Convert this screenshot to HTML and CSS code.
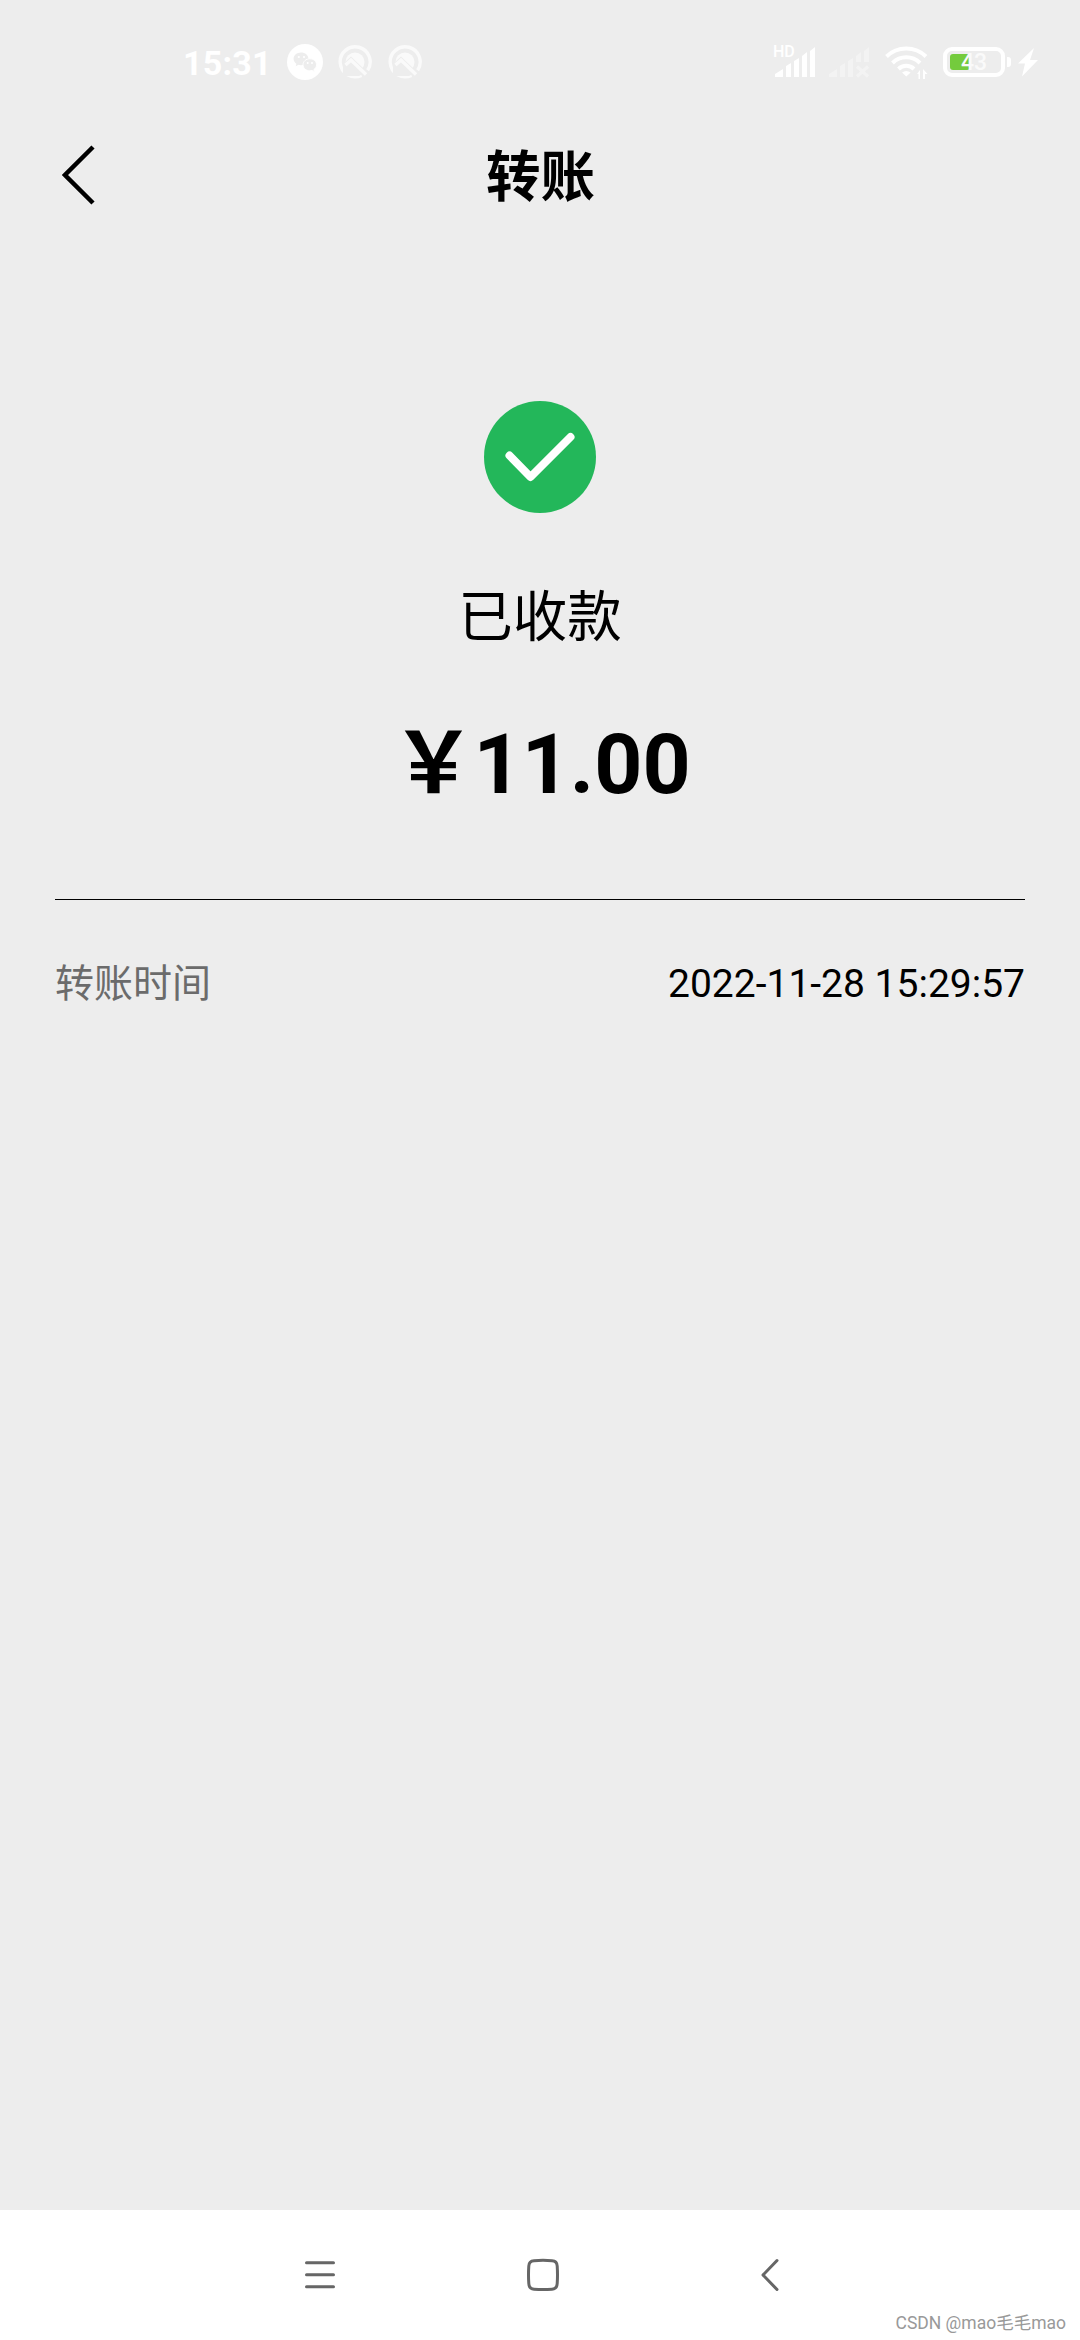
FILE: index.html
```html
<!DOCTYPE html>
<html lang="zh-CN">
<head>
    <meta charset="UTF-8">
    <meta name="viewport" content="width=device-width, initial-scale=1.0">
    <title>转账</title>
    <link rel="stylesheet" href="styles.css">
</head>
<body>
    <div class="phone">
        <div class="status-bar">
            <div class="status-left">
                <span class="clock">15:31</span>
                <svg class="icon-wechat" viewBox="0 0 36 36" width="36" height="36">
                    <circle cx="18" cy="18" r="18" fill="#fff"/>
                    <path d="M14 8.500c-4.200 0-7.400 2.800-7.400 6.300 0 2 1 3.700 2.800 4.900l-.7 2.500 2.800-1.400c.9.200 1.600.4 2.500.4 4.200 0 7.400-2.800 7.400-6.400S18.200 8.500 14 8.500z" fill="#ededed"/>
                    <path d="M22.800 14.800c-3.800 0-6.800 2.600-6.800 6s3 6 6.800 6c.8 0 1.500-.1 2.200-.3l2.400 1.200-.6-2.100c1.700-1.100 2.700-2.800 2.700-4.800 0-3.400-2.900-6-6.700-6z" fill="#ededed" stroke="#fff" stroke-width="1"/>
                    <g fill="#fff"><circle cx="11.800" cy="13" r="1.100"/><circle cx="17" cy="13" r="1.100"/><circle cx="20.700" cy="19" r="1"/><circle cx="25" cy="19" r="1"/></g>
                </svg>
                <svg class="icon-q" viewBox="0 0 34 34" width="34" height="34">
                    <path d="M23.500 30.400A15 15 0 1 1 29.600 25.200" fill="none" stroke="#fafafa" stroke-width="3.400"/>
                    <circle cx="17" cy="17" r="9.500" fill="#fafafa"/>
                    <path d="M5 19l8-7.500L29 27l-8 4H5z" fill="#ededed"/>
                    <path d="M7.500 20l5.500-5 15 14.500" fill="none" stroke="#fafafa" stroke-width="3.400"/>
                </svg>
                <svg class="icon-q" viewBox="0 0 34 34" width="34" height="34">
                    <path d="M23.500 30.400A15 15 0 1 1 29.600 25.200" fill="none" stroke="#fafafa" stroke-width="3.400"/>
                    <circle cx="17" cy="17" r="9.500" fill="#fafafa"/>
                    <path d="M5 19l8-7.500L29 27l-8 4H5z" fill="#ededed"/>
                    <path d="M7.500 20l5.500-5 15 14.500" fill="none" stroke="#fafafa" stroke-width="3.400"/>
                </svg>
            </div>
            <div class="status-right">
                <div class="signal">
                    <svg viewBox="0 0 42 32" width="42" height="32">
                        <path d="M1 31v-3l8-5v8zM12 31V20l5-3v14zM20 31V15l5-3v19zM28 31V10l5-4v25zM36 31V5l5-4v30z" fill="#fff"/>
                    </svg>
                    <span class="hd">HD</span>
                </div>
                <svg class="signal-off" viewBox="0 0 42 32" width="42" height="32">
                    <path d="M1 31v-3l8-5v8zM12 31V20l5-3v14zM20 31V15l5-3v19zM28 16V10l5-4v10zM36 16V5l5-4v15z" fill="#f3f3f3"/>
                    <path d="M29 20.500l11 10M40 20.500l-11 10" stroke="#f3f3f3" stroke-width="3.200"/>
                </svg>
                <svg class="wifi" viewBox="0 0 44 34" width="44" height="34">
                    <g fill="none" stroke="#fff" stroke-width="4">
                        <path d="M1.500 11.500a28.500 28.500 0 0 1 39.500 0"/>
                        <path d="M7.500 18a19.500 19.500 0 0 1 27.500 0"/>
                        <path d="M13.500 24a11 11 0 0 1 15.500 0"/>
                    </g>
                    <path d="M17 27.500q4.300-3 8.600 0L21.300 31.500z" fill="#fff"/>
                    <path d="M32 29l3-4v9h-1.500v-5zM38 34V24l4.500 5H40v5z" fill="#fff"/>
                </svg>
                <div class="battery">
                    <div class="battery-level"></div>
                    <span class="battery-text">43</span>
                </div>
                <div class="battery-cap"></div>
                <svg class="bolt" viewBox="0 0 20 30" width="20" height="30">
                    <path d="M16 1L0 16.500h7L4 29.500 20 13h-8z" fill="#fff"/>
                </svg>
            </div>
        </div>

        <div class="header">
            <svg class="back" viewBox="0 0 34 60" width="34" height="60">
                <path d="M31 2L3 30l28 28" fill="none" stroke="#000" stroke-width="4.500"/>
            </svg>
            <h1>转账</h1>
        </div>

        <div class="result">
            <svg class="check" viewBox="0 0 112 112" width="112" height="112">
                <circle cx="56" cy="56" r="56" fill="#23b75a"/>
                <path d="M25.500 54.500L46.500 76 86.500 36" fill="none" stroke="#fff" stroke-width="8" stroke-linecap="round" stroke-linejoin="round"/>
            </svg>
            <div class="state">已收款</div>
            <div class="amount"><span class="yen">￥</span>11.00</div>
        </div>

        <div class="detail">
            <span class="label">转账时间</span>
            <span class="value">2022-11-28 15:29:57</span>
        </div>

        <div class="nav-bar">
            <svg viewBox="0 0 30 34" width="30" height="34">
                <path d="M1.500 4.700h27M1.500 16.700h27M1.500 28.700h27" stroke="#666" stroke-width="3" stroke-linecap="round"/>
            </svg>
            <svg class="nav-home" viewBox="0 0 32 34" width="32" height="34">
                <path d="M7 2.700Q16 2 25 2.700Q30 3 30.200 8Q30.800 17 30.200 25.500Q30 30.800 25 31.200Q16 31.800 7 31.200Q2 30.800 1.800 25.500Q1.200 17 1.800 8Q2 3 7 2.700z" fill="none" stroke="#666" stroke-width="3"/>
            </svg>
            <svg class="nav-back" viewBox="0 0 18 34" width="18" height="34">
                <path d="M16 2.500L2 17l14 14.500" fill="none" stroke="#666" stroke-width="3" stroke-linecap="round" stroke-linejoin="round"/>
            </svg>
            <span class="watermark">CSDN @mao毛毛mao</span>
        </div>
    </div>
</body>
</html>
```
FILE: styles.css
```css
* {
    box-sizing: border-box;
}

body {
    margin: 0;
    font-family: Roboto, "Noto Sans CJK SC", sans-serif;
    background-color: #ededed;
    color: #000;
}

svg {
    display: block;
    flex-shrink: 0;
}

.phone {
    display: flex;
    flex-direction: column;
    width: 1080px;
    height: 2340px;
    overflow: hidden;
}

.status-bar {
    display: flex;
    justify-content: space-between;
    align-items: center;
    height: 124px;
    padding: 0 42px 0 183px;
}

.status-left,
.status-right {
    display: flex;
    align-items: center;
}

.clock {
    width: 104px;
    padding-top: 1px;
    font-size: 34px;
    font-weight: bold;
    letter-spacing: 0.2px;
    color: #fff;
}

.icon-q {
    margin-left: 15px;
}

.icon-q + .icon-q {
    margin-left: 16px;
}

.signal {
    position: relative;
}

.hd {
    position: absolute;
    left: -1px;
    top: -2px;
    font-size: 16px;
    line-height: 16px;
    font-weight: 500;
    color: #fff;
}

.signal-off {
    margin-left: 12px;
}

.wifi {
    margin-left: 15px;
}

.battery {
    position: relative;
    display: flex;
    align-items: center;
    width: 62px;
    height: 30px;
    margin-left: 14px;
    padding-left: 3px;
    border: 4px solid #fff;
    border-radius: 9px;
}

.battery-level {
    width: 20px;
    height: 16px;
    border-radius: 3px;
    background-color: #74cb3d;
}

.battery-text {
    position: absolute;
    left: 14px;
    top: 0;
    font-size: 23px;
    line-height: 23px;
    font-weight: 500;
    color: #fafafa;
}

.battery-cap {
    width: 4px;
    height: 10px;
    margin-left: 2px;
    border-radius: 0 3px 3px 0;
    background-color: #fff;
}

.bolt {
    margin-left: 7px;
}

.header {
    display: grid;
    grid-template-columns: 120px 1fr 120px;
    align-items: center;
    height: 102px;
}

.back {
    margin-left: 62px;
}

h1 {
    margin: 0;
    padding: 3px 0 0 1px;
    font-size: 54.500px;
    line-height: 80px;
    font-weight: bold;
    text-align: center;
}

.result {
    display: flex;
    flex-direction: column;
    align-items: center;
    height: 674px;
    margin: 0 55px;
    padding-top: 175px;
    border-bottom: 1px solid #000;
}

.state {
    margin-top: 64px;
    font-size: 54.500px;
    line-height: 80px;
}

.amount {
    margin-top: 48px;
    font-size: 84px;
    line-height: 120px;
    font-weight: bold;
}

.yen {
    position: relative;
    left: 2px;
    font-weight: bold;
}

.detail {
    display: flex;
    justify-content: space-between;
    align-items: center;
    margin: 54px 55px 0;
    font-size: 39px;
    line-height: 60px;
}

.label {
    color: #6b6b6b;
}

.nav-bar {
    position: relative;
    display: flex;
    height: 130px;
    margin-top: auto;
    padding: 48px 0 0 305px;
    background-color: #fff;
}

.nav-home {
    margin-left: 192px;
}

.nav-back {
    margin-left: 202px;
}

.watermark {
    position: absolute;
    right: 14px;
    bottom: 4px;
    font-size: 17.500px;
    line-height: 26px;
    color: #999;
}
```
